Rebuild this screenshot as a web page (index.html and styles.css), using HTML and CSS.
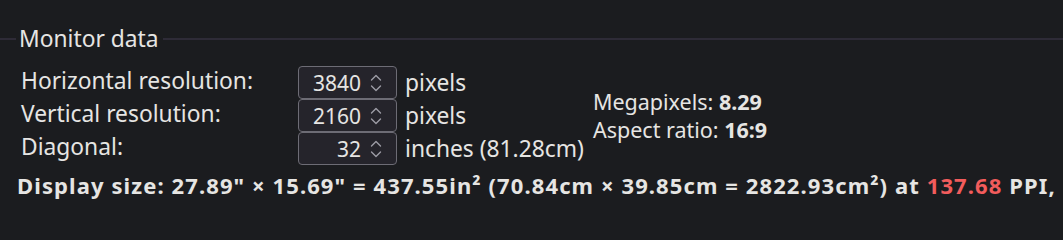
FILE: index.html
```html
<!DOCTYPE html>
<html lang="en">
<head>
<meta charset="utf-8">
<title>Monitor data</title>
<link rel="stylesheet" href="styles.css">
</head>
<body>
<section class="panel">
  <div class="legend"><span class="legend-text">Monitor data</span></div>
  <div class="content">
    <div class="grid">
      <div class="label">Horizontal resolution:</div>
      <div class="field"><span class="num">3840</span><span class="spin"><svg viewBox="0 0 12 18" width="12" height="18"><path d="M1.5 6 L6 1.5 L10.5 6 M1.5 12 L6 16.5 L10.5 12"/></svg></span></div>
      <div class="unit">pixels</div>

      <div class="label">Vertical resolution:</div>
      <div class="field"><span class="num">2160</span><span class="spin"><svg viewBox="0 0 12 18" width="12" height="18"><path d="M1.5 6 L6 1.5 L10.5 6 M1.5 12 L6 16.5 L10.5 12"/></svg></span></div>
      <div class="unit">pixels</div>

      <div class="label">Diagonal:</div>
      <div class="field"><span class="num">32</span><span class="spin"><svg viewBox="0 0 12 18" width="12" height="18"><path d="M1.5 6 L6 1.5 L10.5 6 M1.5 12 L6 16.5 L10.5 12"/></svg></span></div>
      <div class="unit">inches (81.28cm)</div>
    </div>
    <div class="stats">
      <div>Megapixels: <b>8.29</b></div>
      <div>Aspect ratio: <b>16:9</b></div>
    </div>
  </div>
  <p class="summary">Display size: 27.89" × 15.69" = 437.55in² (70.84cm × 39.85cm = 2822.93cm²) at <span class="ppi">137.68</span> <abbr class="ppi-abbr" title="pixels per inch">PPI</abbr>,</p>
</section>
</body>
</html>
```
FILE: styles.css
```css
html, body {
  margin: 0;
  background: #1b1c1f;
}
body {
  color: #e6e5e3;
  font-family: "Noto Sans", "DejaVu Sans", sans-serif;
  font-size: 22.8px;
  overflow: hidden;
}
.panel {
  padding-top: 24px;
}
.legend {
  display: flex;
  align-items: center;
  height: 30px;
  line-height: 30px;
}
.legend::before {
  content: "";
  width: 16px;
  height: 2px;
  background: #2e2b37;
}
.legend::after {
  content: "";
  flex: 1;
  height: 2px;
  background: #2e2b37;
}
.legend-text {
  padding: 0 4px 0 3px;
}
.content {
  display: flex;
  align-items: center;
  margin-top: 12px;
  padding-left: 21px;
}
.grid {
  display: grid;
  grid-template-columns: 277px 99px auto;
  grid-auto-rows: 33px;
}
.label {
  line-height: 29px;
}
.field {
  box-sizing: border-box;
  height: 33px;
  border: 1px solid #6d6c75;
  border-radius: 4px;
  background: #25242b;
  display: flex;
  align-items: center;
  justify-content: flex-end;
  padding-right: 14px;
}
.num {
  font-size: 21px;
  line-height: 31px;
  padding-top: 1px;
}
.spin {
  display: flex;
  margin-left: 9px;
}
.spin svg {
  fill: none;
  stroke: #9d9ca5;
  stroke-width: 1.4;
  stroke-linecap: round;
  stroke-linejoin: round;
}
.unit {
  padding-left: 8px;
  line-height: 33px;
}
.stats {
  margin-left: 9px;
  line-height: 28px;
  font-size: 21.5px;
}
.stats b {
  font-weight: 700;
}
.summary {
  margin: 6px 0 0 17px;
  font-size: 22px;
  font-weight: 700;
  letter-spacing: 1.1px;
  white-space: nowrap;
  line-height: 28px;
}
.ppi {
  color: #f25c5c;
}
.ppi-abbr {
  text-decoration: underline dotted #c4c3cb;
  text-decoration-thickness: 2px;
  text-underline-offset: 5px;
}
```
